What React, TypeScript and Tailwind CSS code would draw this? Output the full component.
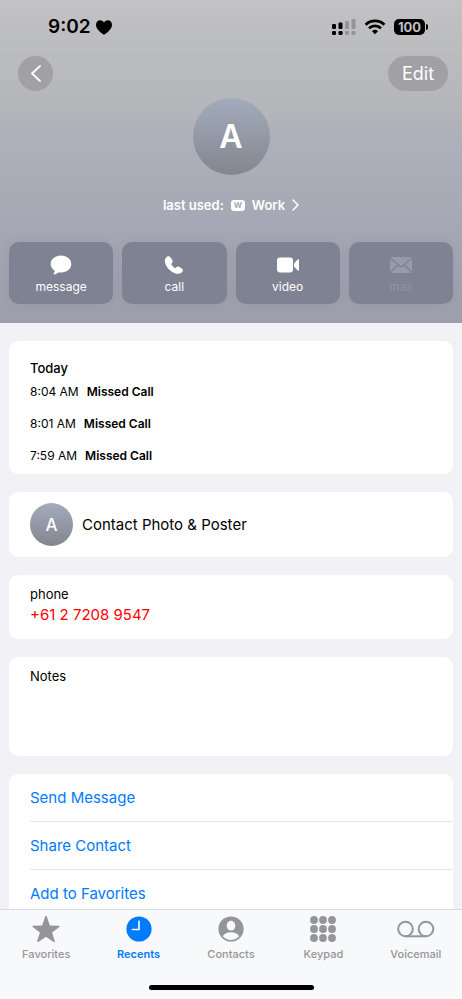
import React from 'react';

interface CallEntry {
  time: string;
  label: string;
}

const calls: CallEntry[] = [
  { time: '8:04 AM', label: 'Missed Call' },
  { time: '8:01 AM', label: 'Missed Call' },
  { time: '7:59 AM', label: 'Missed Call' },
];

const links = ['Send Message', 'Share Contact', 'Add to Favorites'];

const MessageIcon = () => (
  <svg className="w-[22px] h-5" viewBox="0 0 22 20" fill="currentColor">
    <path d="M11 0.6C16.9 0.6 21.3 4.3 21.3 9s-4.4 8.4-10.2 8.4c-.8 0-1.500-.1-2.200-.2C7.400 18.300 5.700 19.300 4.100 19.400c-.7 0-.9-.6-.4-1.100.6-.6 1-1.500 1.100-2.600C2.200 14.200.7 11.800.7 9 .7 4.300 5.100.6 11 .6z" />
  </svg>
);

const CallIcon = () => (
  <svg className="w-[22px] h-5" viewBox="0 0 22 20" fill="currentColor">
    <path d="M3.500 2.100C4.600 1 6.700 1.100 7.600 2.500L9.200 5c.8 1.200.6 2.100-.2 3l-.6.7c-.3.3-.2.600 0 .9.8 1.300 1.900 2.400 3.300 3.300.4.200.7.200 1-.1l.8-.7c.9-.8 1.900-.9 2.900-.2l2.500 1.600c1.300.9 1.400 2.400.3 3.500-1.800 1.900-4.500 2.300-7.300 1.200C7.700 16.600 3.900 12.900 2.400 9 1.500 6.200 1.700 3.900 3.500 2.100z" />
  </svg>
);

const VideoIcon = () => (
  <svg className="w-6 h-5" viewBox="0 0 24 20" fill="currentColor">
    <rect x="1" y="2.500" width="16" height="15" rx="3" />
    <path d="M18 8.400l3.700-4c.6-.5 1.300-.2 1.300.6v10c0 .8-.7 1.100-1.300.6L18 11.600z" />
  </svg>
);

const MailIcon = () => (
  <svg className="w-6 h-5" viewBox="0 0 24 20">
    <rect x="1" y="2" width="22" height="16" rx="2" fill="#979aa8" />
    <path d="M1.500 3.200l9.200 8c.8.6 1.800.6 2.600 0l9.200-8M1.500 17.300l7.300-7.500M22.500 17.300l-7.300-7.500" fill="none" stroke="#7f8292" strokeWidth="1.300" />
  </svg>
);

const StarIcon = () => (
  <svg className="w-7 h-7" viewBox="0 0 28 28" fill="currentColor">
    <path d="M14 .8c.4 0 .6.300.8.800l3.100 9 9 .1c.8 0 1 .8.400 1.300l-7.200 5.400 2.700 8.800c.2.700-.5 1.200-1.100.8L14 21.700 6.300 27c-.6.400-1.300-.1-1.100-.8l2.700-8.800L.7 12c-.6-.5-.4-1.300.4-1.300l9-.1 3.100-9c.2-.5.4-.8.800-.8z" />
  </svg>
);

const ClockIcon = () => (
  <svg className="w-7 h-7" viewBox="0 0 28 28">
    <circle cx="14" cy="14" r="12.600" fill="currentColor" />
    <path d="M14 6.300v8.200H7.500" fill="none" stroke="#fff" strokeWidth="1.600" strokeLinecap="round" />
  </svg>
);

const PersonIcon = () => (
  <svg className="w-7 h-7" viewBox="0 0 28 28">
    <circle cx="14" cy="14" r="12.600" fill="currentColor" />
    <ellipse cx="14" cy="10.700" rx="4.300" ry="4.900" fill="#f8f9fa" />
    <path d="M5.800 21.300c1.400-2.600 4.600-4 8.200-4s6.800 1.400 8.200 4c-2 2.300-4.900 3.700-8.200 3.700s-6.200-1.400-8.200-3.700z" fill="#f8f9fa" />
  </svg>
);

const KeypadIcon = () => (
  <svg className="w-7 h-7" viewBox="0 0 28 28" fill="currentColor">
    {[5, 14, 23].map(y => [5, 14, 23].map(x => (
      <circle key={`${x}-${y}`} cx={x} cy={y} r="3.900" />
    )))}
  </svg>
);

const VoicemailIcon = () => (
  <svg className="w-[38px] h-7" viewBox="0 0 38 28" fill="none" stroke="currentColor" strokeWidth="2">
    <circle cx="8.500" cy="14" r="7.300" />
    <circle cx="29" cy="14" r="7.300" />
    <path d="M8.500 21.300H29" />
  </svg>
);

const actions = [
  { label: 'message', icon: <MessageIcon />, disabled: false },
  { label: 'call', icon: <CallIcon />, disabled: false },
  { label: 'video', icon: <VideoIcon />, disabled: false },
  { label: 'mail', icon: <MailIcon />, disabled: true },
];

const tabs = [
  { label: 'Favorites', icon: <StarIcon /> },
  { label: 'Recents', icon: <ClockIcon />, active: true },
  { label: 'Contacts', icon: <PersonIcon /> },
  { label: 'Keypad', icon: <KeypadIcon /> },
  { label: 'Voicemail', icon: <VoicemailIcon /> },
];

const StatusBar = () => (
  <div className="flex items-center justify-between pl-12 pr-[34px] pt-3 h-[42px] text-black">
    <div className="flex items-center gap-[5px]">
      <span className="text-[19px] leading-6 font-semibold">9:02</span>
      <svg className="w-4 h-[15px]" viewBox="0 0 16 15" fill="currentColor">
        <path d="M8 14.800C5 12.800 0 9.300 0 4.800 0 2.200 1.800.3 4.200.3 5.900.3 7.200 1.200 8 2.600 8.800 1.200 10.100.3 11.800.3 14.200.3 16 2.200 16 4.800c0 4.500-5 8-8 10z" />
      </svg>
    </div>
    <div className="flex items-center gap-2">
      <svg className="w-6 h-4" viewBox="0 0 24 16" fill="currentColor">
        <rect x="0" y="5" width="4" height="5" rx="1.200" />
        <rect x="6.500" y="3.500" width="4" height="6.500" rx="1.200" />
        <rect x="13" y="2" width="4" height="8" rx="1.200" opacity=".22" />
        <rect x="19.500" y="0" width="4" height="10" rx="1.200" opacity=".22" />
        <rect x="0" y="12" width="4" height="4" rx="1.200" />
        <rect x="6.500" y="12" width="4" height="4" rx="1.200" />
        <rect x="13" y="12" width="4" height="4" rx="1.200" opacity=".22" />
        <rect x="19.500" y="12" width="4" height="4" rx="1.200" opacity=".22" />
      </svg>
      <svg className="w-[22px] h-4" viewBox="0 0 22 16">
        <g fill="none" stroke="currentColor" strokeWidth="2.700">
          <path d="M1.600 5.700a13.500 13.500 0 0 1 18.800 0" />
          <path d="M5 9.300a8.600 8.600 0 0 1 12 0" />
        </g>
        <path d="M11 15.300l-3-3.100a4.300 4.300 0 0 1 6 0z" fill="currentColor" />
      </svg>
      <div className="flex items-center gap-px">
        <span className="bg-black text-[#c0c0c4] rounded-[5px] w-[31px] h-4 text-center text-[13px] leading-4 font-bold">100</span>
        <span className="bg-black w-[2px] h-[6px] rounded-r-full"></span>
      </div>
    </div>
  </div>
);

const Card: React.FC<{ className?: string; children: React.ReactNode }> = ({ className = '', children }) => (
  <section className={`bg-white rounded-[9px] pl-[21px] ${className}`}>{children}</section>
);

const App: React.FC = () => {
  return (
    <div className="h-screen flex flex-col overflow-hidden bg-[#f2f1f6] text-black font-['Inter','Liberation_Sans',sans-serif]">
      <header className="shrink-0 pb-[19px] text-white bg-[linear-gradient(180deg,#c2c2c5_0%,#b4b5b8_35%,#aeb1ba_41%,#a6a8b5_68%,#9c9eab_100%)]">
        <StatusBar />

        <div className="flex items-start justify-between px-[14px] pt-[14px] h-14">
          <button aria-label="Back" className="ml-1 w-[35px] h-[35px] rounded-full bg-[#a1a1a5] flex items-center justify-center">
            <svg className="w-[10px] h-[17px]" viewBox="0 0 10 17" fill="none" stroke="currentColor" strokeWidth="1.800" strokeLinecap="round" strokeLinejoin="round">
              <path d="M9 1L1 8.500 9 16" />
            </svg>
          </button>
          <button className="w-[60px] h-[35px] rounded-full bg-[#a1a1a5] text-[18px] leading-6">Edit</button>
        </div>

        <div className="flex flex-col items-center">
          <div className="w-[77px] h-[77px] rounded-full bg-linear-to-b from-[#a3abbc] to-[#83868f] flex items-center justify-center text-[32px] leading-10 font-semibold">A</div>
          <button className="mt-5 flex items-center text-[13px] leading-5 font-semibold">
            <span>last used:</span>
            <span className="ml-[7px] w-[14px] h-[11px] rounded-[3px] bg-white text-[#a6a8b3] text-[8px] leading-[11px] text-center font-bold">W</span>
            <span className="ml-[7px]">Work</span>
            <svg className="ml-[7px] w-[7px] h-3" viewBox="0 0 7 12" fill="none" stroke="currentColor" strokeWidth="1.500" strokeLinecap="round" strokeLinejoin="round">
              <path d="M1 1l5 5-5 5" />
            </svg>
          </button>
        </div>

        <div className="grid grid-cols-4 gap-[9px] px-[9px] mt-[27px]">
          {actions.map(action => (
            <button
              key={action.label}
              disabled={action.disabled}
              className={`h-[62px] rounded-[10px] bg-[#7f8292] flex flex-col items-center pt-[13px] gap-1 shadow-[0_0_8px_rgba(110,112,125,0.15)] ${action.disabled ? 'text-[#9194a2]' : 'text-white'}`}
            >
              {action.icon}
              <span className="text-[12px] leading-4">{action.label}</span>
            </button>
          ))}
        </div>
      </header>

      <main className="flex-1 min-h-0 overflow-y-auto [scrollbar-width:none] px-[9px] pt-[18px] flex flex-col gap-[18px]">
        <Card className="shrink-0 pt-[18px] pb-[10px]">
          <h2 className="text-[13px] leading-[18px] font-medium">Today</h2>
          <ul className="flex flex-col gap-4 mt-[7px]">
            {calls.map(call => (
              <li key={call.time} className="flex gap-2 text-[12px] leading-4">
                <span>{call.time}</span>
                <span className="font-semibold">{call.label}</span>
              </li>
            ))}
          </ul>
        </Card>

        <Card className="shrink-0 py-[11px]">
          <button className="flex items-center gap-[9px] text-[15px] leading-5">
            <span className="w-[43px] h-[43px] rounded-full bg-linear-to-b from-[#a3abbc] to-[#83868f] text-white flex items-center justify-center text-[17px] font-medium">A</span>
            <span>Contact Photo &amp; Poster</span>
          </button>
        </Card>

        <Card className="shrink-0 pt-[10px] pb-3">
          <div className="text-[13px] leading-[18px]">phone</div>
          <a href="tel:+61272089547" className="block text-[15px] leading-6 text-[#ff0000]">+61 2 7208 9547</a>
        </Card>

        <Card className="shrink-0 pt-[10px] pb-[7px] pr-[21px]">
          <label htmlFor="notes" className="block text-[13px] leading-[18px]">Notes</label>
          <textarea id="notes" className="block w-full h-16 resize-none outline-none text-[15px] leading-5" />
        </Card>

        <Card className="shrink-0">
          {links.map((link, i) => (
            <div key={link} className={i > 0 ? 'border-t border-[#e4e4e6]' : ''}>
              <button className="w-full h-[47px] text-left text-[15px] leading-5 text-[#007aff]">{link}</button>
            </div>
          ))}
        </Card>
      </main>

      <nav className="shrink-0 bg-[#f8f9fa] border-t border-[#d9dadc]">
        <div className="grid grid-cols-5 pt-[5px]">
          {tabs.map(tab => (
            <button key={tab.label} className={`flex flex-col items-center gap-[3px] text-[11px] leading-4 ${tab.active ? 'text-[#007aff] font-semibold' : 'text-[#959598] font-medium'}`}>
              {tab.icon}
              <span>{tab.label}</span>
            </button>
          ))}
        </div>
        <div className="w-[165px] h-[5px] rounded-full bg-black mx-auto mt-[23px] mb-[9px]"></div>
      </nav>
    </div>
  );
};

export default App;
